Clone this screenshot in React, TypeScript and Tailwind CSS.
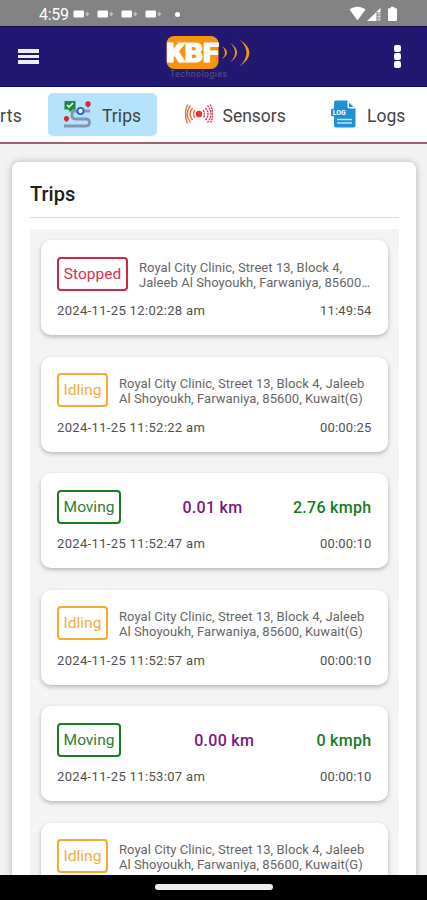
import React from 'react';

type Status = 'Stopped' | 'Idling' | 'Moving';

interface Trip {
  id: number;
  status: Status;
  time?: string;
  duration?: string;
  address?: [string, string];
  distance?: string;
  speed?: string;
}

const kuwait: [string, string] = [
  'Royal City Clinic, Street 13, Block 4, Jaleeb',
  'Al Shoyoukh, Farwaniya, 85600, Kuwait(G)',
];

const trips: Trip[] = [
  {
    id: 1,
    status: 'Stopped',
    time: '2024-11-25 12:02:28 am',
    duration: '11:49:54',
    address: ['Royal City Clinic, Street 13, Block 4,', 'Jaleeb Al Shoyoukh, Farwaniya, 85600…'],
  },
  { id: 2, status: 'Idling', time: '2024-11-25 11:52:22 am', duration: '00:00:25', address: kuwait },
  { id: 3, status: 'Moving', time: '2024-11-25 11:52:47 am', duration: '00:00:10', distance: '0.01 km', speed: '2.76 kmph' },
  { id: 4, status: 'Idling', time: '2024-11-25 11:52:57 am', duration: '00:00:10', address: kuwait },
  { id: 5, status: 'Moving', time: '2024-11-25 11:53:07 am', duration: '00:00:10', distance: '0.00 km', speed: '0 kmph' },
  { id: 6, status: 'Idling', address: kuwait },
];

const badgeStyles: Record<Status, string> = {
  Stopped: 'w-[71px] border-[#d32643] text-[#d9304c]',
  Idling: 'w-[51px] border-[#f3ac32] text-[#f7ad3c]',
  Moving: 'w-[64px] border-[#187c20] text-[#2b7e32]',
};

function CameraIcon() {
  return (
    <svg width="18" height="10" viewBox="0 0 18 10" fill="#fff">
      <rect x="0.5" y="1.5" width="10.500" height="7" rx="1.2" />
      <path d="M12 5l2.2-2.200L16.500 5l-2.300 2.200z" opacity="0.45" />
    </svg>
  );
}

function StatusBar() {
  return (
    <div className="flex h-[26px] shrink-0 items-center bg-[#838383] pt-[2px] pl-[39px] text-white">
      <span className="w-[34px] pt-[1px] text-[16px] leading-none tracking-[-0.300px]">4:59</span>
      <div className="flex gap-[6px]">
        <CameraIcon />
        <CameraIcon />
        <CameraIcon />
        <CameraIcon />
      </div>
      <span className="ml-[12px] size-[5px] rounded-full bg-white" />
      <svg className="ml-auto" width="50" height="16" viewBox="0 0 50 16" fill="#fff">
        <path d="M0.5 3.6C5.500-.2 11.500-.2 16.500 3.600L8.500 14.500z" />
        <path d="M18 15L31.500 2v4h-4V15z" />
        <path d="M28.500 7.500h3M28.500 10.500h3M28.500 13.500h3" stroke="#fff" strokeWidth="1.800" opacity="0.7" />
        <path d="M41.700 .7h3.600v1.500h1.700a1 1 0 0 1 1 1V14a1 1 0 0 1-1 1h-7a1 1 0 0 1-1-1V3.200a1 1 0 0 1 1-1h1.700z" />
      </svg>
      <span className="w-[28px]" />
    </div>
  );
}

function Logo() {
  return (
    <svg width="90" height="46" viewBox="0 0 90 46" className="block">
      <rect x="2.500" y="2" width="52" height="33" rx="7.500" fill="#f6930f" />
      <text x="2.500" y="28" textLength="52" lengthAdjust="spacingAndGlyphs" fontFamily="Roboto, sans-serif" fontWeight="900" fontSize="25.500" fill="#fff" stroke="#fff" strokeWidth="1.200">KBF</text>
      <g fill="#f6930f">
        <path d="M58 12q6 6.500 0 13q10-6.500 0-13z" />
        <path d="M66 8.500q10 10 0 20q14-10 0-20z" />
        <path d="M75.500 5.500q14 13 0 27q20-14 0-27z" />
      </g>
      <text x="6" y="42.500" textLength="57" fontFamily="Roboto, sans-serif" fontSize="8.500" fill="#5a547c">Technologies</text>
    </svg>
  );
}

function Header() {
  return (
    <header className="flex h-[61px] shrink-0 items-center border-y border-[#140a60] bg-[#231871] pl-[18px] pr-[26px]">
      <div className="flex w-[21px] flex-col gap-[2px]">
        <span className="h-[3.500px] bg-[#edeef8]" />
        <span className="h-[3.500px] bg-[#edeef8]" />
        <span className="h-[3.500px] bg-[#edeef8]" />
      </div>
      <div className="ml-[125px] pt-[1px]"><Logo /></div>
      <div className="ml-auto flex flex-col gap-px pb-[1px]">
        <span className="size-[7px] rounded-[2px] bg-white" />
        <span className="size-[7px] rounded-[2px] bg-white" />
        <span className="size-[7px] rounded-[2px] bg-white" />
      </div>
    </header>
  );
}

function RouteIcon() {
  return (
    <svg width="29" height="29" viewBox="0 0 29 29" fill="none">
      <path d="M21 11h6M14 11h-3q-2 0-2 3v2q0 3 4 3h10q3.500 0 3.500 3.500t-3.500 3.500H1" stroke="#8795b5" strokeWidth="2.800" />
      <path d="M1.500 1h11v8.500H9.500L7 12 5.500 9.500h-4z" fill="#148c3d" />
      <path d="M4 5l2 2 4-4" stroke="#fff" strokeWidth="1.700" />
      <circle cx="17.500" cy="11" r="3.100" fill="#fff" stroke="#2364d0" strokeWidth="1.900" />
      <circle cx="25" cy="3.900" r="2.700" fill="#d12b35" />
      <circle cx="3.500" cy="18.600" r="2.600" fill="#d12b35" />
      <path d="M2 20.300h3l-1.500 2zM23.500 5.500h3L25 8z" fill="#d12b35" />
    </svg>
  );
}

function SensorIcon() {
  return (
    <svg width="28" height="22" viewBox="0 0 28 22" fill="none" strokeWidth="1.400">
      <g stroke="#f26b42">
        <path d="M10 7q-3 4 0 8M7.500 5q-5 6 0 12M5.500 2.500q-7 8.500 0 17M2.800 1.500q-5 9.500 0 19" />
      </g>
      <g stroke="#df3154" strokeDasharray="2 0.800">
        <path d="M18 7q3 4 0 8M20.500 5q5 6 0 12M22.500 2.500q7 8.500 0 17M25.200 1.500q5 9.500 0 19" />
      </g>
      <circle cx="14" cy="11" r="3.200" fill="#ed2f2f" />
    </svg>
  );
}

function LogIcon() {
  return (
    <svg width="26" height="28" viewBox="0 0 26 28">
      <path d="M5 .5h11.500L24.500 8.500v17a2 2 0 0 1-2 2H5a2 2 0 0 1-2-2v-23a2 2 0 0 1 2-2z" fill="#218fd4" />
      <path d="M16.500 .5v6.200a1.800 1.800 0 0 0 1.800 1.800h6.200z" fill="#fff" />
      <path d="M18 2.800V7h4.500z" fill="#218fd4" />
      <rect x="0" y="8.800" width="16.500" height="7.500" rx="1" fill="#218fd4" />
      <text x="1.800" y="15" fontFamily="Roboto, sans-serif" fontWeight="700" fontSize="7" fill="#fff" textLength="13">LOG</text>
      <path d="M6 19.500h15M6 23h15" stroke="#b9e4fa" strokeWidth="1.500" />
    </svg>
  );
}

function Tabs() {
  return (
    <nav className="flex h-[56.500px] shrink-0 items-center overflow-hidden border-b-2 border-[#a3616f] bg-white text-[17.500px] text-[#444]">
      <span className="w-[48px] pt-[3px] tracking-[0.300px]">rts</span>
      <div className="flex h-[43px] w-[109px] items-center rounded-[5px] bg-[#b5e3fc] pl-[15px]">
        <RouteIcon />
        <span className="ml-[10px] pt-[4px] tracking-[0.050px]">Trips</span>
      </div>
      <div className="ml-[28px] flex items-center">
        <SensorIcon />
        <span className="ml-[9.500px] w-[63.500px] pt-[3px]">Sensors</span>
      </div>
      <div className="ml-[45px] flex items-center">
        <LogIcon />
        <span className="ml-[10px] pt-[3px]">Logs</span>
      </div>
    </nav>
  );
}

function TripCard({ trip }: { trip: Trip }) {
  return (
    <article className="h-[95px] w-[346.500px] shrink-0 rounded-[10px] bg-white pl-[16px] pr-[16px] pt-[16px] shadow-[0_2px_4px_rgba(0,0,0,0.25)]">
      <div className="flex h-[35px] items-center">
        <span className={`flex h-[34px] shrink-0 items-center justify-center rounded-[4px] border-2 pt-[2px] text-[15.500px] ${badgeStyles[trip.status]}`}>
          {trip.status}
        </span>
        {trip.address ? (
          <div className="ml-[11px] whitespace-nowrap pt-[2px] text-[13px] leading-[15px] tracking-[0.060px] text-[#666]">
            <p>{trip.address[0]}</p>
            <p>{trip.address[1]}</p>
          </div>
        ) : (
          <div className="ml-[11px] flex grow items-center justify-between pt-[2px] text-[16px] font-medium tracking-[0.300px]">
            <span />
            <span className="text-[#791682]">{trip.distance}</span>
            <span className="text-[#187c20]">{trip.speed}</span>
          </div>
        )}
      </div>
      {trip.time && (
        <div className="mt-[11px] flex justify-between text-[13px] leading-[18px] text-[#505050]">
          <span className="tracking-[0.340px]">{trip.time}</span>
          <span className="tracking-[0.180px]">{trip.duration}</span>
        </div>
      )}
    </article>
  );
}

export default function App() {
  return (
    <div className="flex h-[900px] w-[427px] flex-col overflow-hidden bg-[#f3f3f3] font-['Roboto',sans-serif]">
      <StatusBar />
      <Header />
      <Tabs />
      <main className="min-h-0 grow overflow-hidden px-[12px] pt-[18.500px]">
        <section className="h-[800px] w-[404px] rounded-[7px] bg-white pl-[18px] pr-[17px] shadow-[0_0_7px_rgba(0,0,0,0.28)]">
          <h1 className="h-[56px] border-b border-[#dcdcdc] pt-[17px] text-[20px] font-medium leading-[30px] text-[#202020]">Trips</h1>
          <div className="mt-[11px] flex h-[800px] flex-col gap-[21.500px] bg-[#f4f4f4] pl-[11px] pt-[11px]">
            {trips.map((trip) => (
              <TripCard key={trip.id} trip={trip} />
            ))}
          </div>
        </section>
      </main>
      <footer className="flex h-[25px] shrink-0 justify-center bg-black pt-[9px]">
        <span className="h-[6px] w-[118px] rounded-full bg-[#eee]" />
      </footer>
    </div>
  );
}
